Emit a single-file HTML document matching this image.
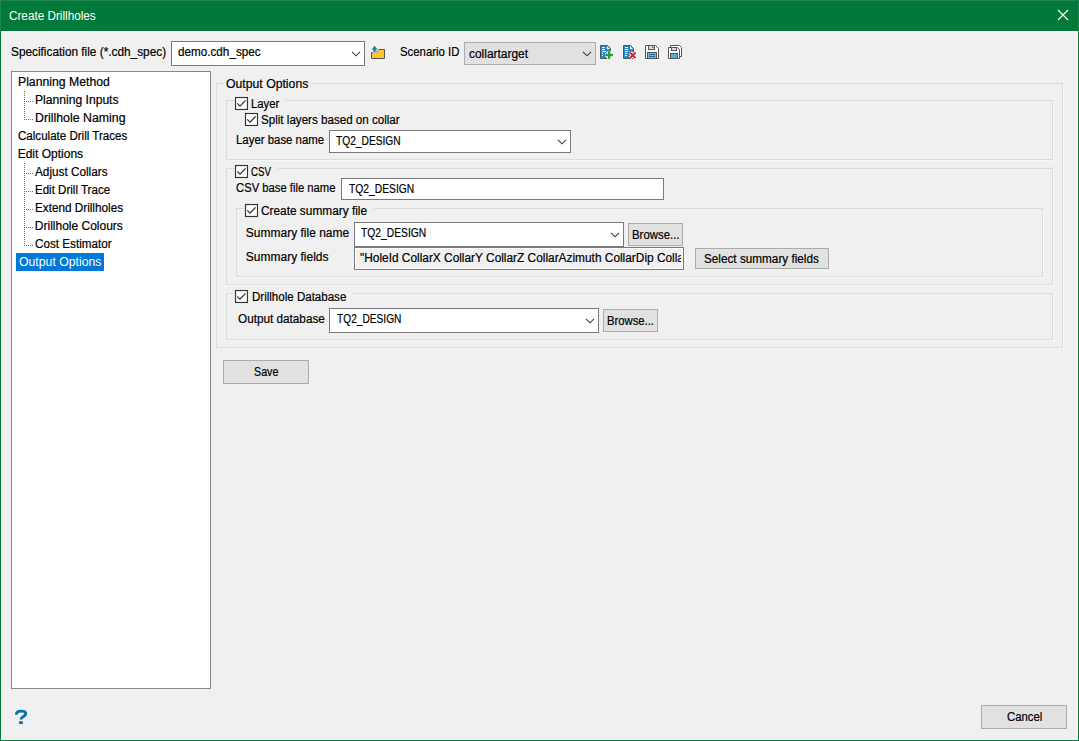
<!DOCTYPE html>
<html><head><meta charset="utf-8">
<style>
*{box-sizing:border-box;margin:0;padding:0}
html,body{width:1079px;height:741px;overflow:hidden;background:#f0f0f0}
body{position:relative;font-family:"Liberation Sans",sans-serif;font-size:12px;color:#000}
.a{position:absolute}
.t{position:absolute;line-height:14px;white-space:nowrap;transform-origin:0 0;-webkit-text-stroke:0.2px currentColor}
</style></head><body>
<div class="a" style="left:0px;top:0px;width:1079px;height:31px;background:#017a39"></div>
<div class="a" style="left:0px;top:0px;width:1079px;height:1px;background:#1e8550"></div>
<div class="a" style="left:0px;top:0px;width:1px;height:31px;background:#1e8550"></div>
<div class="a" style="left:1078px;top:0px;width:1px;height:31px;background:#1e8550"></div>
<div class="a" style="left:0px;top:31px;width:1px;height:710px;background:#017a39"></div>
<div class="a" style="left:1078px;top:31px;width:1px;height:710px;background:#017a39"></div>
<div class="a" style="left:0px;top:740px;width:1079px;height:1px;background:#017a39"></div>
<div class="a" style="left:1px;top:31px;width:1077px;height:1px;background:#fbfbfb"></div>
<div class="a" style="left:1px;top:31px;width:1px;height:709px;background:#fbfbfb"></div>
<div class="a" style="left:1077px;top:31px;width:1px;height:709px;background:#fbfbfb"></div>
<div class="a" style="left:1px;top:739px;width:1077px;height:1px;background:#fbfbfb"></div>
<div class="t" style="left:9.02px;top:9px;transform:scaleX(0.9770);color:#fff;-webkit-text-stroke:0;">Create Drillholes</div>
<svg class="a" style="left:1057px;top:9px" width="12" height="12" viewBox="0 0 12 12"><path d="M1 1L11 11M11 1L1 11" stroke="#fff" stroke-width="1.1"/></svg>
<div class="t" style="left:10.61px;top:45px;transform:scaleX(0.9853);">Specification file (*.cdh_spec)</div>
<div class="a" style="left:171px;top:41px;width:194px;height:25px;background:#fff;border:1px solid #7a7a7a"></div>
<svg class="a" style="left:350px;top:50px" width="12" height="8" viewBox="0 0 12 8"><path d="M2 1.8L6 5.8L10 1.8" fill="none" stroke="#3a3a3a" stroke-width="1.1"/></svg>
<div class="t" style="left:178.00px;top:45px;transform:scaleX(0.9750);">demo.cdh_spec</div>
<svg class="a" style="left:369px;top:44px" width="18" height="16" viewBox="369 44 18 16">
<path d="M371.5 52.5H376.5L377.5 49.5H384.5V58.5H371.5Z" fill="#fcc72d" stroke="#555" stroke-width="1"/>
<path d="M374.6 45.3L370.9 49.9H373V52.6H376.1V49.9H378.3Z" fill="#1a80b6" stroke="#fff" stroke-width="0.7"/>
</svg>
<div class="t" style="left:400.05px;top:45px;transform:scaleX(0.9475);">Scenario ID</div>
<div class="a" style="left:464px;top:42px;width:132px;height:23px;background:#e1e1e1;border:1px solid #adadad"></div>
<svg class="a" style="left:581px;top:50px" width="12" height="8" viewBox="0 0 12 8"><path d="M2 1.8L6 5.8L10 1.8" fill="none" stroke="#3a3a3a" stroke-width="1.1"/></svg>
<div class="t" style="left:469.10px;top:47px;transform:scaleX(0.9949);">collartarget</div>
<svg class="a" style="left:598px;top:42px" width="90" height="20" viewBox="598 42 90 20">
<path d="M600.5 45.5H607.5L610.5 48.5V58.5H600.5Z" fill="#2a8bc4" stroke="#555"/>
<path d="M607 46L610 49H607Z" fill="#fff"/>
<path d="M602 47.5H605M602 49.5H605M602 51.5H606M602 53.5H603M602 55.5H603" stroke="#fff"/>
<path d="M609.1 51.2V58.8M605.3 55H612.9" stroke="#fff" stroke-width="4.4"/>
<path d="M609.1 51.2V58.8M605.3 55H612.9" stroke="#2e9a2e" stroke-width="2.3"/>
<path d="M623.5 45.5H630.5L633.5 48.5V58.5H623.5Z" fill="#2a8bc4" stroke="#555"/>
<path d="M630 46L633 49H630Z" fill="#fff"/>
<path d="M625 47.5H628M625 49.5H628M625 51.5H628M625 53.5H627M625 55.5H627" stroke="#fff"/>
<path d="M630 52.5L635.5 58M635.5 52.5L630 58" stroke="#fff" stroke-width="3.5"/>
<path d="M630 52.5L635.5 58M635.5 52.5L630 58" stroke="#c8242b" stroke-width="1.8"/>
<path d="M645.5 45.5H655.5L658.5 48.5V58.5H645.5Z" fill="#fff" stroke="#555"/>
<rect x="648.5" y="45.5" width="6" height="4" fill="#ddd" stroke="#555"/>
<rect x="652" y="46.6" width="1.4" height="1.4" fill="#1a80b6"/>
<rect x="647.5" y="52.5" width="9" height="6" fill="#6bb9e3" stroke="#555"/>
<path d="M649 54.5H655M649 56.5H655" stroke="#1a6fa8"/>
<path d="M670.5 45.5H679.5L681.5 47.5V56.5H670.5Z" fill="#fff" stroke="#555"/>
<path d="M668.5 47.5H677.5L679.5 49.5V58.5H668.5Z" fill="#fff" stroke="#555"/>
<rect x="671.5" y="47.5" width="5" height="3" fill="#ddd" stroke="#555"/>
<rect x="670.5" y="53.5" width="7" height="5" fill="#5aa9d6" stroke="#555"/>
</svg>
<div class="a" style="left:11px;top:71px;width:200px;height:618px;background:#fff;border:1px solid #828790"></div>
<div class="t" style="left:17.58px;top:75px;transform:scaleX(1.0191);">Planning Method</div>
<div class="t" style="left:34.89px;top:93px;transform:scaleX(1.0099);">Planning Inputs</div>
<div class="t" style="left:34.87px;top:111px;transform:scaleX(1.0279);">Drillhole Naming</div>
<div class="t" style="left:17.74px;top:129px;transform:scaleX(0.9634);">Calculate Drill Traces</div>
<div class="t" style="left:17.70px;top:147px;">Edit Options</div>
<div class="t" style="left:35.30px;top:165px;transform:scaleX(0.9797);">Adjust Collars</div>
<div class="t" style="left:34.84px;top:183px;transform:scaleX(0.9623);">Edit Drill Trace</div>
<div class="t" style="left:34.82px;top:201px;transform:scaleX(0.9775);">Extend Drillholes</div>
<div class="t" style="left:34.80px;top:219px;">Drillhole Colours</div>
<div class="t" style="left:34.93px;top:237px;transform:scaleX(0.9731);">Cost Estimator</div>
<div class="a" style="left:16px;top:253px;width:88px;height:18px;background:#0078d7"></div>
<div class="t" style="left:19.00px;top:255px;transform:scaleX(1.0212);color:#fff;-webkit-text-stroke:0;">Output Options</div>
<div class="a" style="left:24px;top:91px;width:1px;height:29px;background:repeating-linear-gradient(to bottom,#707070 0 1px,transparent 1px 2px)"></div>
<div class="a" style="left:26px;top:101px;width:8px;height:1px;background:repeating-linear-gradient(to right,#707070 0 1px,transparent 1px 2px)"></div>
<div class="a" style="left:26px;top:119px;width:8px;height:1px;background:repeating-linear-gradient(to right,#707070 0 1px,transparent 1px 2px)"></div>
<div class="a" style="left:24px;top:163px;width:1px;height:83px;background:repeating-linear-gradient(to bottom,#707070 0 1px,transparent 1px 2px)"></div>
<div class="a" style="left:26px;top:173px;width:8px;height:1px;background:repeating-linear-gradient(to right,#707070 0 1px,transparent 1px 2px)"></div>
<div class="a" style="left:26px;top:191px;width:8px;height:1px;background:repeating-linear-gradient(to right,#707070 0 1px,transparent 1px 2px)"></div>
<div class="a" style="left:26px;top:209px;width:8px;height:1px;background:repeating-linear-gradient(to right,#707070 0 1px,transparent 1px 2px)"></div>
<div class="a" style="left:26px;top:227px;width:8px;height:1px;background:repeating-linear-gradient(to right,#707070 0 1px,transparent 1px 2px)"></div>
<div class="a" style="left:26px;top:245px;width:8px;height:1px;background:repeating-linear-gradient(to right,#707070 0 1px,transparent 1px 2px)"></div>
<div class="a" style="left:216px;top:83px;width:847px;height:265px;border:1px solid #dcdcdc;box-shadow:1px 1px 0 rgba(255,255,255,0.45)"></div>
<div class="a" style="left:223px;top:77px;width:87px;height:14px;background:#f0f0f0"></div>
<div class="t" style="left:226.20px;top:77px;transform:scaleX(1.0200);">Output Options</div>
<div class="a" style="left:226px;top:100px;width:827px;height:60px;border:1px solid #dcdcdc;box-shadow:1px 1px 0 rgba(255,255,255,0.45)"></div>
<div class="a" style="left:234px;top:95px;width:51px;height:16px;background:#f0f0f0"></div>
<svg class="a" style="left:234px;top:96px" width="15" height="15" viewBox="0 0 15 15"><rect x="0.5" y="0.5" width="14" height="14" fill="none" stroke="#fff" stroke-opacity="0.6"/><rect x="1.5" y="1.5" width="12" height="12" fill="#fff" stroke="#333" stroke-width="1.2"/><path d="M3.3 7.4L6 10.1L11.6 4.4" fill="none" stroke="#333" stroke-width="1.3"/></svg>
<div class="t" style="left:250.76px;top:97px;transform:scaleX(0.9414);">Layer</div>
<svg class="a" style="left:244px;top:112px" width="15" height="15" viewBox="0 0 15 15"><rect x="0.5" y="0.5" width="14" height="14" fill="none" stroke="#fff" stroke-opacity="0.6"/><rect x="1.5" y="1.5" width="12" height="12" fill="#fff" stroke="#333" stroke-width="1.2"/><path d="M3.3 7.4L6 10.1L11.6 4.4" fill="none" stroke="#333" stroke-width="1.3"/></svg>
<div class="t" style="left:260.73px;top:113px;transform:scaleX(0.9671);">Split layers based on collar</div>
<div class="t" style="left:236.35px;top:133px;transform:scaleX(0.9505);">Layer base name</div>
<div class="a" style="left:329px;top:130px;width:242px;height:23px;background:#fff;border:1px solid #7a7a7a"></div>
<svg class="a" style="left:556px;top:138px" width="12" height="8" viewBox="0 0 12 8"><path d="M2 1.8L6 5.8L10 1.8" fill="none" stroke="#3a3a3a" stroke-width="1.1"/></svg>
<div class="t" style="left:336.40px;top:134px;transform:scaleX(0.8507);">TQ2_DESIGN</div>
<div class="a" style="left:226px;top:168px;width:827px;height:117px;border:1px solid #dcdcdc;box-shadow:1px 1px 0 rgba(255,255,255,0.45)"></div>
<div class="a" style="left:234px;top:163px;width:44px;height:16px;background:#f0f0f0"></div>
<svg class="a" style="left:234px;top:164px" width="15" height="15" viewBox="0 0 15 15"><rect x="0.5" y="0.5" width="14" height="14" fill="none" stroke="#fff" stroke-opacity="0.6"/><rect x="1.5" y="1.5" width="12" height="12" fill="#fff" stroke="#333" stroke-width="1.2"/><path d="M3.3 7.4L6 10.1L11.6 4.4" fill="none" stroke="#333" stroke-width="1.3"/></svg>
<div class="t" style="left:251.29px;top:165px;transform:scaleX(0.8083);">CSV</div>
<div class="t" style="left:236.36px;top:181px;transform:scaleX(0.9381);">CSV base file name</div>
<div class="a" style="left:341px;top:178px;width:323px;height:22px;background:#fff;border:1px solid #7a7a7a"></div>
<div class="t" style="left:348.50px;top:182px;transform:scaleX(0.8573);">TQ2_DESIGN</div>
<div class="a" style="left:236px;top:208px;width:807px;height:69px;border:1px solid #dcdcdc;box-shadow:1px 1px 0 rgba(255,255,255,0.45)"></div>
<div class="a" style="left:244px;top:203px;width:130px;height:16px;background:#f0f0f0"></div>
<svg class="a" style="left:244px;top:203px" width="15" height="15" viewBox="0 0 15 15"><rect x="0.5" y="0.5" width="14" height="14" fill="none" stroke="#fff" stroke-opacity="0.6"/><rect x="1.5" y="1.5" width="12" height="12" fill="#fff" stroke="#333" stroke-width="1.2"/><path d="M3.3 7.4L6 10.1L11.6 4.4" fill="none" stroke="#333" stroke-width="1.3"/></svg>
<div class="t" style="left:261.31px;top:204px;transform:scaleX(0.9877);">Create summary file</div>
<div class="t" style="left:245.80px;top:226px;">Summary file name</div>
<div class="a" style="left:354px;top:222px;width:270px;height:25px;background:#fff;border:1px solid #7a7a7a"></div>
<svg class="a" style="left:609px;top:231px" width="12" height="8" viewBox="0 0 12 8"><path d="M2 1.8L6 5.8L10 1.8" fill="none" stroke="#3a3a3a" stroke-width="1.1"/></svg>
<div class="t" style="left:361.10px;top:226px;transform:scaleX(0.8573);">TQ2_DESIGN</div>
<div class="a" style="left:628px;top:223px;width:55px;height:23px;background:#e1e1e1;border:1px solid #adadad"></div>
<div class="t" style="left:632.05px;top:228px;transform:scaleX(0.9500);">Browse...</div>
<div class="t" style="left:245.80px;top:250px;">Summary fields</div>
<div class="a" style="left:354px;top:247px;width:330px;height:23px;background:#f0f0f0;border:1px solid #7a7a7a;box-shadow:inset 0 0 0 1px #fff">
<div class="a" style="left:1px;top:1px;right:2px;bottom:1px;overflow:hidden">
<div class="t" style="left:4.1px;top:2px;transform:scaleX(0.9893)">&quot;HoleId CollarX CollarY CollarZ CollarAzimuth CollarDip CollarInclination</div></div></div>
<div class="a" style="left:695px;top:248px;width:134px;height:21px;background:#e1e1e1;border:1px solid #adadad"></div>
<div class="t" style="left:704.12px;top:252px;transform:scaleX(0.9784);">Select summary fields</div>
<div class="a" style="left:226px;top:293px;width:827px;height:47px;border:1px solid #dcdcdc;box-shadow:1px 1px 0 rgba(255,255,255,0.45)"></div>
<div class="a" style="left:234px;top:288px;width:118px;height:16px;background:#f0f0f0"></div>
<svg class="a" style="left:234px;top:289px" width="15" height="15" viewBox="0 0 15 15"><rect x="0.5" y="0.5" width="14" height="14" fill="none" stroke="#fff" stroke-opacity="0.6"/><rect x="1.5" y="1.5" width="12" height="12" fill="#fff" stroke="#333" stroke-width="1.2"/><path d="M3.3 7.4L6 10.1L11.6 4.4" fill="none" stroke="#333" stroke-width="1.3"/></svg>
<div class="t" style="left:251.54px;top:290px;transform:scaleX(0.9619);">Drillhole Database</div>
<div class="t" style="left:237.50px;top:312px;transform:scaleX(0.9784);">Output database</div>
<div class="a" style="left:329px;top:308px;width:270px;height:25px;background:#fff;border:1px solid #7a7a7a"></div>
<svg class="a" style="left:584px;top:317px" width="12" height="8" viewBox="0 0 12 8"><path d="M2 1.8L6 5.8L10 1.8" fill="none" stroke="#3a3a3a" stroke-width="1.1"/></svg>
<div class="t" style="left:336.60px;top:312px;transform:scaleX(0.8480);">TQ2_DESIGN</div>
<div class="a" style="left:603px;top:309px;width:55px;height:23px;background:#e1e1e1;border:1px solid #adadad"></div>
<div class="t" style="left:607.26px;top:314px;transform:scaleX(0.9396);">Browse...</div>
<div class="a" style="left:223px;top:360px;width:86px;height:24px;background:#e1e1e1;border:1px solid #adadad"></div>
<div class="t" style="left:254.11px;top:365px;transform:scaleX(0.8923);">Save</div>
<svg class="a" style="left:12px;top:707px" width="20" height="20" viewBox="12 707 20 20">
<path d="M16.3 714.6C16.4 711.9 18.4 711.1 21 711.1C24 711.1 25.8 712.2 25.8 713.8C25.8 716.4 20.8 716.6 20.8 719.6" fill="none" stroke="#0a6ea8" stroke-width="2.9"/>
<rect x="19.1" y="721.2" width="3.7" height="2.8" fill="#0a6ea8"/>
</svg>
<div class="a" style="left:981px;top:705px;width:86px;height:24px;background:#e1e1e1;border:1px solid #adadad"></div>
<div class="t" style="left:1006.55px;top:710px;transform:scaleX(0.9472);">Cancel</div>
</body></html>
